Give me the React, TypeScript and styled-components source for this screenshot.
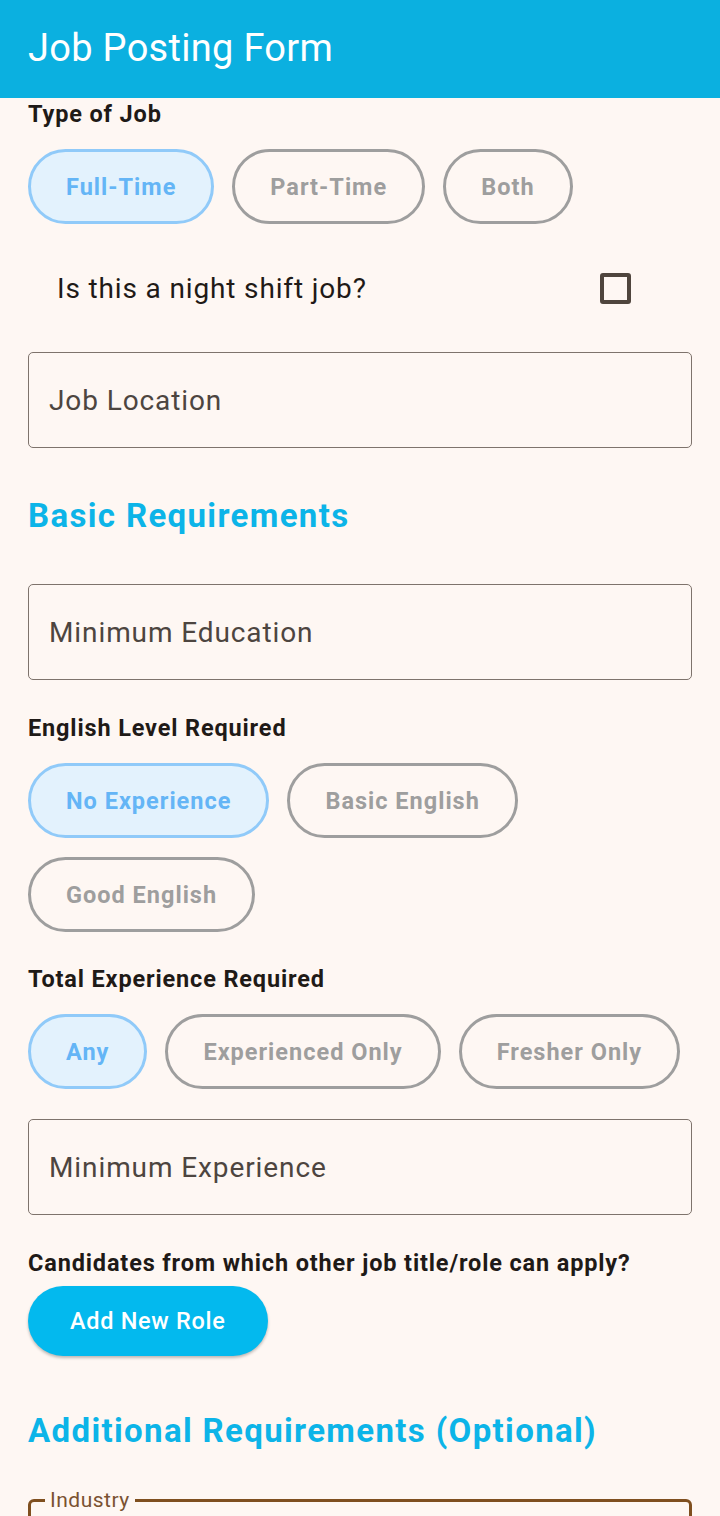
import React from "react";
import styled, { createGlobalStyle } from "styled-components";

const GlobalStyle = createGlobalStyle`
  html, body {
    margin: 0;
    padding: 0;
    background: #fef7f3;
    font-family: Roboto, "Noto Sans", "Liberation Sans", sans-serif;
  }
  * { box-sizing: border-box; }
`;

const Page = styled.div`
  width: 720px;
  height: 1516px;
  background: #fef7f3;
  overflow: hidden;
`;

const AppBar = styled.header`
  height: 98px;
  background: #0bb0e0;
  display: flex;
  align-items: center;
  padding: 0 28px 2px;
`;

const Title = styled.h1`
  margin: 0;
  font-size: 38px;
  font-weight: 400;
  letter-spacing: 0.3px;
  color: #ffffff;
  line-height: 44px;
`;

const Content = styled.main`
  display: flex;
  flex-direction: column;
  padding: 0 28px;
`;

const FieldLabel = styled.div<{ $top: number }>`
  margin-top: ${(p) => p.$top}px;
  font-size: 23.5px;
  font-weight: 700;
  letter-spacing: 0.85px;
  line-height: 28px;
  color: #1f1a17;
`;

const SectionTitle = styled.h2<{ $top: number }>`
  margin: ${(p) => p.$top}px 0 0;
  font-size: 33px;
  font-weight: 700;
  letter-spacing: 1.35px;
  line-height: 38px;
  color: #0cb4e8;
`;

const ChipGroup = styled.div<{ $top: number }>`
  margin-top: ${(p) => p.$top}px;
  display: flex;
  flex-wrap: wrap;
  column-gap: 18px;
  row-gap: 19px;
`;

const Chip = styled.button<{ $selected?: boolean }>`
  height: 75px;
  padding: 0 35px;
  border-radius: 38px;
  border: 3px solid ${(p) => (p.$selected ? "#90caf9" : "#9e9e9e")};
  background: ${(p) => (p.$selected ? "#e3f2fd" : "transparent")};
  color: ${(p) => (p.$selected ? "#64b5f6" : "#9e9e9e")};
  font-family: inherit;
  font-size: 23.5px;
  font-weight: 700;
  letter-spacing: 1px;
  display: flex;
  align-items: center;
  justify-content: center;
  cursor: pointer;
`;

const CheckRow = styled.label`
  margin-top: 32px;
  height: 64px;
  display: flex;
  align-items: center;
  justify-content: space-between;
  padding: 0 61px 0 29px;
`;

const CheckText = styled.span`
  font-size: 28px;
  letter-spacing: 0.85px;
  color: #1f1a17;
`;

const CheckBox = styled.span`
  width: 31px;
  height: 31px;
  border: 4px solid #4f453d;
  border-radius: 3px;
`;

const TextField = styled.input<{ $top: number }>`
  margin-top: ${(p) => p.$top}px;
  width: 100%;
  height: 96px;
  border: 1.5px solid #7e736c;
  border-radius: 5px;
  background: transparent;
  padding: 0 20px;
  font-family: inherit;
  font-size: 28px;
  letter-spacing: 0.9px;
  color: #1f1a17;
  outline: none;
  &::placeholder {
    color: #4d4540;
  }
`;

const PrimaryButton = styled.button`
  margin-top: 9px;
  align-self: flex-start;
  height: 70px;
  padding: 0 42px;
  border: none;
  border-radius: 35px;
  background: #03b9ee;
  color: #ffffff;
  font-family: inherit;
  font-size: 23.5px;
  font-weight: 500;
  letter-spacing: 0.7px;
  box-shadow: 0 2px 3px rgba(0, 0, 0, 0.25);
  cursor: pointer;
`;

const OutlinedBox = styled.fieldset`
  margin: 38px 0 0;
  padding: 0 14px;
  height: 110px;
  border: 3px solid #7f4f1f;
  border-radius: 6px;
`;

const BoxLegend = styled.legend`
  padding: 0 5px;
  font-size: 21px;
  letter-spacing: 0.5px;
  line-height: 24px;
  color: #7a5231;
`;

export default function App() {
  return (
    <Page>
      <GlobalStyle />
      <AppBar>
        <Title>Job Posting Form</Title>
      </AppBar>
      <Content>
        <FieldLabel $top={2}>Type of Job</FieldLabel>
        <ChipGroup $top={21}>
          <Chip $selected>Full-Time</Chip>
          <Chip>Part-Time</Chip>
          <Chip>Both</Chip>
        </ChipGroup>
        <CheckRow>
          <CheckText>Is this a night shift job?</CheckText>
          <CheckBox />
        </CheckRow>
        <TextField $top={32} placeholder="Job Location" />

        <SectionTitle $top={49}>Basic Requirements</SectionTitle>
        <TextField $top={49} placeholder="Minimum Education" />

        <FieldLabel $top={34}>English Level Required</FieldLabel>
        <ChipGroup $top={21}>
          <Chip $selected>No Experience</Chip>
          <Chip>Basic English</Chip>
          <Chip>Good English</Chip>
        </ChipGroup>

        <FieldLabel $top={33}>Total Experience Required</FieldLabel>
        <ChipGroup $top={21}>
          <Chip $selected>Any</Chip>
          <Chip>Experienced Only</Chip>
          <Chip>Fresher Only</Chip>
        </ChipGroup>
        <TextField $top={30} placeholder="Minimum Experience" />

        <FieldLabel $top={34}>Candidates from which other job title/role can apply?</FieldLabel>
        <PrimaryButton>Add New Role</PrimaryButton>

        <SectionTitle $top={56}>Additional Requirements (Optional)</SectionTitle>
        <OutlinedBox>
          <BoxLegend>Industry</BoxLegend>
        </OutlinedBox>
      </Content>
    </Page>
  );
}
